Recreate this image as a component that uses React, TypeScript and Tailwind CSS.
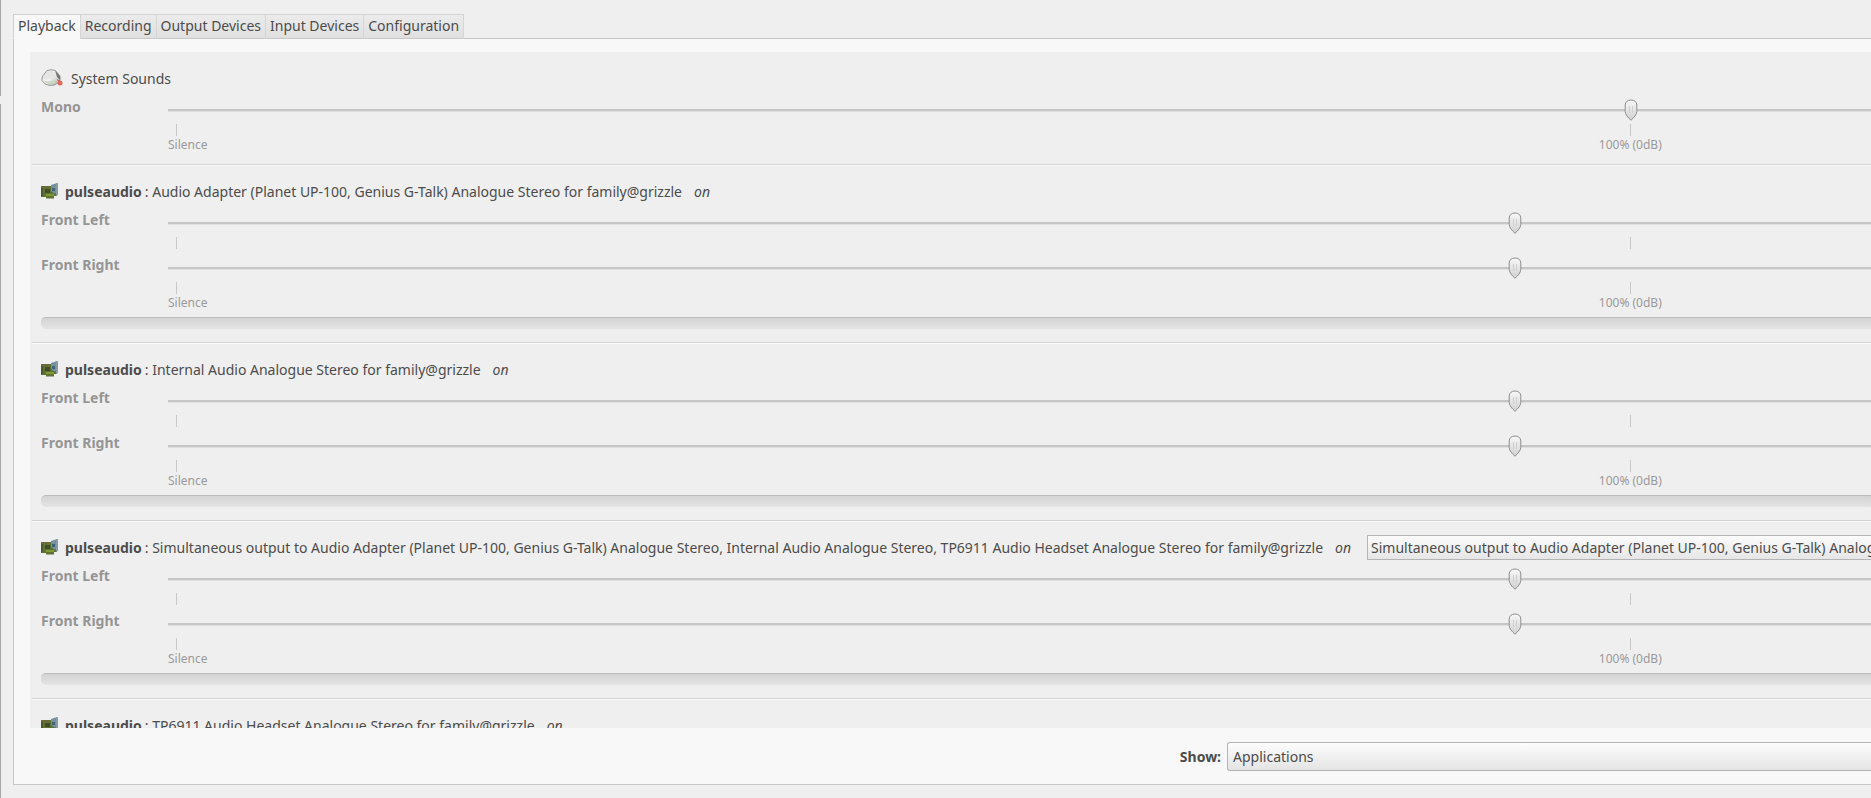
import { useState } from "react";

const MAX_VOLUME = 116;

const tabs = ["Playback", "Recording", "Output Devices", "Input Devices", "Configuration"];

const simultaneous =
    "Simultaneous output to Audio Adapter (Planet UP-100, Genius G-Talk) Analogue Stereo, Internal Audio Analogue Stereo, TP6911 Audio Headset Analogue Stereo";

const streams = [
    { title: "Audio Adapter (Planet UP-100, Genius G-Talk) Analogue Stereo for family@grizzle" },
    { title: "Internal Audio Analogue Stereo for family@grizzle" },
    { title: `${simultaneous} for family@grizzle`, device: simultaneous },
    { title: "TP6911 Audio Headset Analogue Stereo for family@grizzle" },
];

const SpeakerIcon = () => (
    <svg width="22" height="18" viewBox="0 0 22 18" className="shrink-0">
        <defs>
            <linearGradient id="speaker" x1="0" y1="0" x2="1" y2="1">
                <stop offset="0" stopColor="#d0d0d0" />
                <stop offset="0.5" stopColor="#f4f4f2" />
                <stop offset="1" stopColor="#9da296" />
            </linearGradient>
        </defs>
        <path d="M6 1.5 Q10 0 14.500 1.500 L19 7 Q20 10 18 13 Q14 17 9 16.500 Q3 16 1 11.500 Q0.500 9 2 6.500 Z" fill="url(#speaker)" stroke="#9a9a98" strokeLinejoin="round" />
        <path d="M6.500 2 H13.500 L15.500 8 Q10 12 2.500 9 Z" fill="#e6e6e6" />
        <path d="M14 1.500 L19 7 L19 11 L16 8 Z" fill="#777" />
        <path d="M3 11.500 Q9 14 15 10.500 Q14 14.500 9 15 Q5 15 3 11.500 Z" fill="#cbd6bf" />
        <circle cx="19" cy="14" r="2.500" fill="#e0695c" />
        <path d="M16 10.500 L19 12.500" stroke="#b85a4e" />
    </svg>
);

const CardIcon = () => (
    <svg width="18" height="17" viewBox="0 0 18 17" className="shrink-0">
        <path d="M0 3 H12 L16 5 V13 H13 V15.500 H5 V14 H0 Z" fill="#5f7233" />
        <path d="M0 3 H8 V5 H0 Z" fill="#6b6a3b" />
        <path d="M0 5 H2 V13 H0 Z" fill="#4a5a2c" />
        <rect x="4" y="6" width="5" height="4" fill="#3f4d2b" />
        <rect x="5" y="11" width="8" height="2" fill="#809a35" />
        <path d="M10 2 L16 0 L17 1 V6 L14 11 L10 8 Z" fill="#7391a1" />
        <path d="M15 1 L17 0 V12 L15 13 Z" fill="#8b9aa0" />
        <path d="M11 5 H14 V8 H11 Z" fill="#3f6478" />
    </svg>
);

const Thumb = () => (
    <svg width="14" height="22" viewBox="0 0 14 22" className="block">
        <defs>
            <linearGradient id="thumb" x1="0" y1="0" x2="0" y2="1">
                <stop offset="0" stopColor="#f8f8f8" />
                <stop offset="1" stopColor="#d0d0d0" />
            </linearGradient>
        </defs>
        <path
            d="M7 1 C10.500 1 12.800 3 12.800 6 V12.500 C12.800 15.500 10 18.500 7 21.300 C4 18.500 1.200 15.500 1.200 12.500 V6 C1.200 3 3.500 1 7 1 Z"
            fill="url(#thumb)"
            stroke="#8f8f8f"
        />
        <path d="M5.500 7 V14 M8.500 7 V14" stroke="#cfcfcf" />
    </svg>
);

const Channel = ({ name, initial, last = false }: { name: string; initial: number; last?: boolean }) => {
    const [volume, setVolume] = useState(initial);
    return (
        <label className="flex">
            <span className="w-[127px] shrink-0 text-[14px] leading-5 font-bold text-[#959595]">{name}</span>
            <span className="block min-w-0 flex-1">
                <span className="relative flex h-[26px] items-center">
                    <input
                        type="range"
                        min={0}
                        max={MAX_VOLUME}
                        value={volume}
                        onChange={(e) => setVolume(Number(e.target.value))}
                        className="m-0 h-[22px] w-full appearance-none bg-transparent [&::-webkit-slider-runnable-track]:h-[3px] [&::-webkit-slider-runnable-track]:border-b [&::-webkit-slider-runnable-track]:border-[#e0e0e0] [&::-webkit-slider-runnable-track]:bg-[#c6c6c6] [&::-webkit-slider-thumb]:h-[22px] [&::-webkit-slider-thumb]:w-[14px] [&::-webkit-slider-thumb]:appearance-none [&::-webkit-slider-thumb]:opacity-0"
                    />
                    <span
                        className="pointer-events-none absolute top-[2px]"
                        style={{ left: `calc((100% - 14px) * ${volume / MAX_VOLUME})` }}
                    >
                        <Thumb />
                    </span>
                </span>
                <span className="grid h-[19px] grid-cols-[100fr_16fr] px-2 pt-px">
                    <span className="h-[12px] border-l border-[#c8c8c8]"></span>
                    <span className="h-[12px] border-l border-[#c8c8c8]"></span>
                </span>
                {last && (
                    <span className="-mt-[5px] grid grid-cols-[100fr_16fr] px-2 text-[12px] leading-4 text-[#9a9a9a]">
                        <span className="-ml-2">Silence</span>
                        <span>
                            <span className="inline-block -translate-x-1/2">100% (0dB)</span>
                        </span>
                    </span>
                )}
            </span>
        </label>
    );
};

const Stream = ({ title, device }: { title: string; device?: string }) => (
    <section className="h-[178px] shrink-0 border-b border-[#d2d2d2] pt-[13px] pl-[9px] shadow-[0_1px_0_#fbfbfb]">
        <div className="flex h-[26px] items-center whitespace-nowrap">
            <CardIcon />
            <b className="ml-[6px] text-[14px]">pulseaudio</b>
            <span className="ml-[3px]">: {title}</span>
            <i className="ml-3">on</i>
            {device && (
                <select
                    aria-label="Output device"
                    className="ml-4 h-[25px] min-w-[800px] shrink-0 appearance-none border border-r-0 border-[#b4b4b4] bg-linear-to-b from-[#fcfcfc] to-[#e6e6e6] pl-[3px]"
                >
                    <option>{device}</option>
                </select>
            )}
        </div>
        <div className="pt-[6px]">
            <Channel name="Front Left" initial={92} />
            <Channel name="Front Right" initial={92} last />
        </div>
        <div className="mt-[6px] h-[12px] rounded-l-[5px] border-t border-[#bcbcbc] bg-linear-to-b from-[#d4d4d4] to-[#e4e4e4]"></div>
    </section>
);

export default function App() {
    const [active, setActive] = useState("Playback");

    return (
        <div className="flex h-screen overflow-hidden bg-[#efefef] font-['Noto_Sans','Open_Sans',sans-serif] text-[14px] text-[#4c4c4c]">
            {/* window edge */}
            <div className="flex w-[13px] shrink-0 flex-col">
                <div className="h-24 border-l border-[#a8a8a8]"></div>
                <div className="h-2"></div>
                <div className="flex-1 border-l border-[#a8a8a8]"></div>
            </div>

            <div className="flex min-w-0 flex-1 flex-col pt-[14px] pb-[13px]">
                <div role="tablist" className="z-10 -mb-px flex h-[25px] shrink-0">
                    {tabs.map((tab) => (
                        <button
                            key={tab}
                            role="tab"
                            aria-selected={tab === active}
                            onClick={() => setActive(tab)}
                            className={`border border-r-0 px-1 pb-[2px] whitespace-nowrap last:border-r ${
                                tab === active
                                    ? "border-[#cfcfcf] border-b-[#f8f8f8] bg-[#f8f8f8]"
                                    : "border-[#d6d6d6] border-b-[#c8c8c8] bg-linear-to-b from-[#ebebeb] to-[#e0e0e0]"
                            }`}
                        >
                            {tab}
                        </button>
                    ))}
                </div>

                <main className="flex min-h-0 flex-1 flex-col border border-r-0 border-[#c6c6c6] bg-[#f8f8f8] pt-[13px]">
                    <div className="ml-4 flex min-h-0 flex-1 flex-col overflow-hidden bg-[#efefef] pl-[2px]">
                        <section className="h-[113px] shrink-0 border-b border-[#d2d2d2] pt-[13px] pl-[9px] shadow-[0_1px_0_#fbfbfb]">
                            <div className="flex h-[26px] items-center">
                                <SpeakerIcon />
                                <span className="ml-2">System Sounds</span>
                            </div>
                            <div className="pt-[6px]">
                                <Channel name="Mono" initial={100} last />
                            </div>
                        </section>
                        {streams.map((stream) => (
                            <Stream key={stream.title} {...stream} />
                        ))}
                    </div>

                    <div className="flex shrink-0 items-center pt-[14px] pb-[13px]">
                        <label htmlFor="show" className="w-[65%] text-right font-bold">
                            Show:
                        </label>
                        <select
                            id="show"
                            className="ml-[6px] h-[29px] min-w-0 flex-1 appearance-none rounded-l-[3px] border border-r-0 border-[#b4b4b4] bg-linear-to-b from-[#fdfdfd] to-[#e4e4e4] pl-[5px]"
                        >
                            <option>Applications</option>
                            <option>All Streams</option>
                            <option>Virtual Streams</option>
                        </select>
                    </div>
                </main>
            </div>
        </div>
    );
}
